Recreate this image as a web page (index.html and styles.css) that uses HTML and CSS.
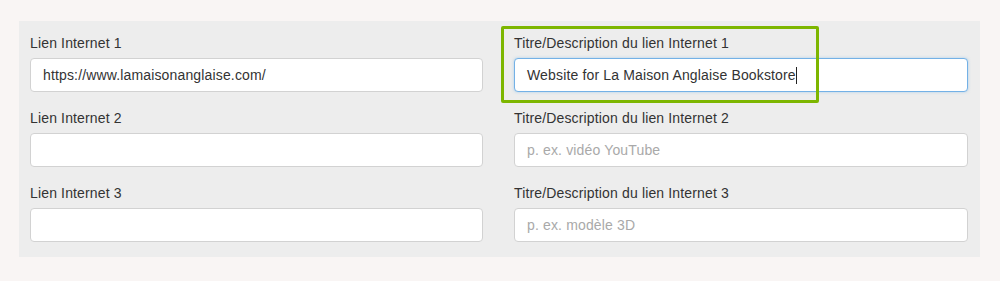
FILE: index.html
```html
<!DOCTYPE html>
<html lang="fr">
<head>
<meta charset="utf-8">
<title>Liens Internet</title>
<link rel="stylesheet" href="styles.css">
</head>
<body>
<div class="page">
  <div class="panel">
    <div class="grid">
      <div class="field">
        <label class="label">Lien Internet 1</label>
        <div class="input">https://www.lamaisonanglaise.com/</div>
      </div>
      <div class="field highlighted">
        <label class="label">Titre/Description du lien Internet 1</label>
        <div class="input focused">Website for La Maison Anglaise Bookstore<span class="caret"></span></div>
        <div class="highlight"></div>
      </div>
      <div class="field">
        <label class="label">Lien Internet 2</label>
        <div class="input"></div>
      </div>
      <div class="field">
        <label class="label">Titre/Description du lien Internet 2</label>
        <div class="input placeholder">p. ex. vidéo YouTube</div>
      </div>
      <div class="field">
        <label class="label">Lien Internet 3</label>
        <div class="input"></div>
      </div>
      <div class="field">
        <label class="label">Titre/Description du lien Internet 3</label>
        <div class="input placeholder">p. ex. modèle 3D</div>
      </div>
    </div>
  </div>
</div>
</body>
</html>
```

FILE: styles.css
```css
html, body {
  margin: 0;
  padding: 0;
  background: #f9f5f4;
  font-family: "Liberation Sans", Arial, sans-serif;
  color: #333;
}
.page {
  width: 1000px;
  height: 281px;
  padding: 21px 20px 0 19px;
  box-sizing: border-box;
}
.panel {
  width: 961px;
  height: 236px;
  background: #ededed;
  padding: 12px 12px 0 11px;
  box-sizing: border-box;
}
.grid {
  display: grid;
  grid-template-columns: 453px 454px;
  column-gap: 31px;
}
.field {
  position: relative;
  margin-bottom: 16px;
}
.label {
  display: block;
  font-size: 14px;
  line-height: 20px;
  letter-spacing: 0.15px;
  margin-bottom: 5px;
  color: #333;
}
.input {
  height: 34px;
  box-sizing: border-box;
  background: #fff;
  border: 1px solid #d2d2d2;
  border-radius: 4px;
  padding: 0 12px;
  font-size: 14px;
  line-height: 32px;
  letter-spacing: 0.15px;
  color: #333;
  white-space: nowrap;
}
.input.focused {
  border-color: #74b1e6;
  box-shadow: 0 0 3px rgba(102, 175, 233, 0.5);
}
.input.placeholder {
  color: #a9a9a9;
}
.caret {
  display: inline-block;
  width: 1px;
  height: 17px;
  background: #222;
  vertical-align: -4px;
}
.highlight {
  position: absolute;
  left: -13px;
  top: -7px;
  width: 318px;
  height: 77px;
  border: 3px solid #7db600;
  border-radius: 2px;
  box-sizing: border-box;
  pointer-events: none;
}
```
